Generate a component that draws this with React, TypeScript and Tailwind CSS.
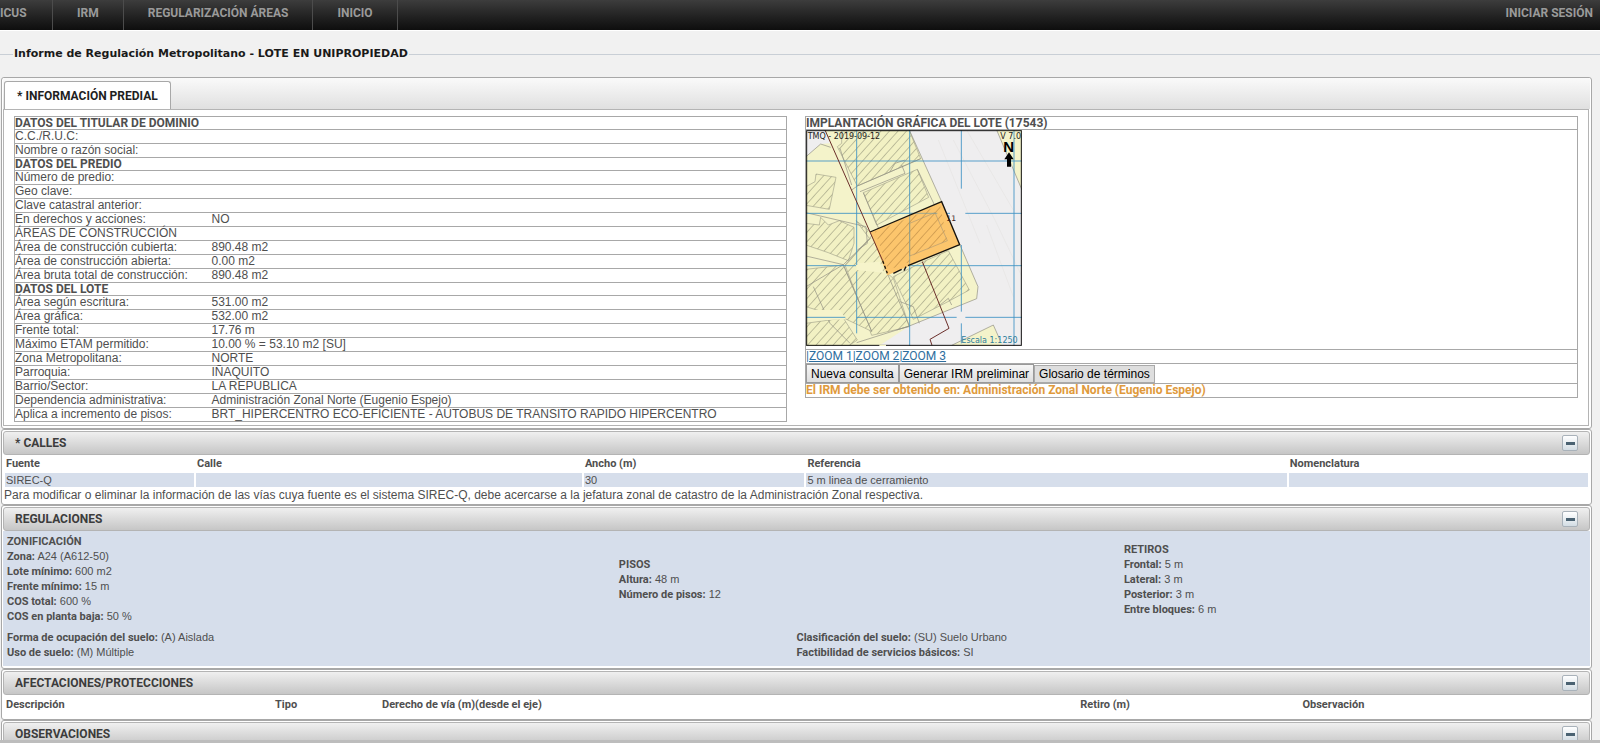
import { useState } from 'react';
import type { ReactNode } from 'react';

type Row = { label: string; value?: string; heading?: boolean; span?: boolean };

const navItems = ['IRM', 'REGULARIZACIÓN ÁREAS', 'INICIO'];

const lotRows: Row[] = [
  { label: 'DATOS DEL TITULAR DE DOMINIO', heading: true },
  { label: 'C.C./R.U.C:' },
  { label: 'Nombre o razón social:' },
  { label: 'DATOS DEL PREDIO', heading: true },
  { label: 'Número de predio:' },
  { label: 'Geo clave:' },
  { label: 'Clave catastral anterior:' },
  { label: 'En derechos y acciones:', value: 'NO' },
  { label: 'ÁREAS DE CONSTRUCCIÓN', span: true },
  { label: 'Área de construcción cubierta:', value: '890.48 m2' },
  { label: 'Área de construcción abierta:', value: '0.00 m2' },
  { label: 'Área bruta total de construcción:', value: '890.48 m2' },
  { label: 'DATOS DEL LOTE', heading: true },
  { label: 'Área según escritura:', value: '531.00 m2' },
  { label: 'Área gráfica:', value: '532.00 m2' },
  { label: 'Frente total:', value: '17.76 m' },
  { label: 'Máximo ETAM permitido:', value: '10.00 % = 53.10 m2 [SU]' },
  { label: 'Zona Metropolitana:', value: 'NORTE' },
  { label: 'Parroquia:', value: 'IÑAQUITO' },
  { label: 'Barrio/Sector:', value: 'LA REPUBLICA' },
  { label: 'Dependencia administrativa:', value: 'Administración Zonal Norte (Eugenio Espejo)' },
  {
    label: 'Aplica a incremento de pisos:',
    value: 'BRT_HIPERCENTRO ECO-EFICIENTE - AUTOBUS DE TRANSITO RAPIDO HIPERCENTRO',
  },
];

function NavBar() {
  return (
    <nav className="flex h-[31px] items-stretch border-b border-white bg-linear-to-b from-[#3d3d3d] to-[#0e0e0e] font-[Roboto,sans-serif] text-xs font-bold text-[#9a9a9a]">
      <a href="#ticus" className="w-[53px] border-r border-[#4c4c4c] pt-[5px]">
        ICUS
      </a>
      {navItems.map((item) => (
        <a key={item} href="#menu" className="border-r border-[#4c4c4c] px-6 pt-[5px]">
          {item}
        </a>
      ))}
      <a href="#login" className="ml-auto pr-[7px] pt-[5px]">
        INICIAR SESIÓN
      </a>
    </nav>
  );
}

function Section({ title, children }: { title: string; children?: ReactNode }) {
  const [open, setOpen] = useState(true);

  return (
    <section className="rounded-[3px] border border-[#a8a8a8] bg-white px-px pt-px">
      <header className="flex h-6 items-center justify-between rounded-[3px] border border-[#b4b4b4] bg-linear-to-b from-[#f0f0f0] to-[#c6c6c6] pl-[11px] pr-[11px]">
        <h2 className="font-[Roboto,sans-serif] text-xs font-bold text-[#3c3c3c]">{title}</h2>
        <button
          type="button"
          onClick={() => setOpen(!open)}
          aria-label={`Mostrar u ocultar ${title}`}
          aria-expanded={open}
          className="flex h-4 w-4 items-center justify-center rounded-[2px] border border-[#a9b2ba] bg-linear-to-b from-white to-[#d3dde4]"
        >
          <span className="h-[3px] w-[9px] bg-[#4a6272]" />
        </button>
      </header>
      {open && children}
    </section>
  );
}

function LotTable() {
  return (
    <table className="w-full table-fixed border-collapse border border-[#a8a8a8] text-left">
      <colgroup>
        <col className="w-[196px]" />
        <col />
      </colgroup>
      <tbody>
        {lotRows.map((row) =>
          row.heading || row.span ? (
            <tr key={row.label} className="border-b border-[#a8a8a8]">
              <th
                colSpan={2}
                className={
                  row.heading
                    ? 'p-0 font-[Roboto,sans-serif] leading-3 font-bold'
                    : 'p-0 leading-[13px] font-normal'
                }
              >
                {row.label}
              </th>
            </tr>
          ) : (
            <tr key={row.label} className="border-b border-[#a8a8a8]">
              <th className="p-0 leading-[13px] font-normal">{row.label}</th>
              <td className="px-px py-0 leading-[13px]">{row.value}</td>
            </tr>
          ),
        )}
      </tbody>
    </table>
  );
}

function LotMap() {
  return (
    <svg
      viewBox="78 60 648 648"
      className="block h-[216px] w-[216px]"
      fill="none"
      role="img"
      aria-label="Implantación gráfica del lote"
    >
      <defs>
        <pattern id="hatch" width="19" height="19" patternUnits="userSpaceOnUse" patternTransform="rotate(42)">
          <rect width="19" height="19" fill="#f2f1c3" />
          <path d="M1 0V19" stroke="#98977c" strokeWidth="2" />
        </pattern>
        <pattern id="hatchLot" width="19" height="19" patternUnits="userSpaceOnUse" patternTransform="rotate(42)">
          <path d="M1 0V19" stroke="#b98743" strokeWidth="2" />
        </pattern>
      </defs>
      <rect x="78" y="60" width="648" height="648" fill="#efeeef" />

      {/* manzanas */}
      <path d="M135 60L388 60L485 275L594 530L590 566L388 648L300 706L78 708V140L122 102L150 100Z" fill="#f4f3ca" />
      <path d="M650 60H726V240Z M515 706L640 645L668 708Z" fill="#f4f3ca" />
      <g fill="url(#hatch)" stroke="#a5a48c" strokeWidth="2">
        <path d="M172 110L185 100V62H388L422 146L232 228Z" />
        <path d="M250 248L412 178L446 262L290 345Z" />
        <path d="M78 230L105 215L108 192L168 202L148 298L78 286Z" />
        <path d="M78 340L118 345L122 322L145 345L178 332L222 352V400L205 452L145 428L78 405Z" />
        <path d="M228 332L272 366L322 490L340 505L388 650L275 676L195 465L268 385Z" />
        <path d="M78 478L190 465L275 664L195 626L78 590Z" />
        <path d="M340 500L430 455L505 422L568 540L498 578L400 628Z" />
        <path d="M78 640L190 624L232 690L205 708H78Z" />
      </g>
      <g stroke="#8e8d80" strokeWidth="2">
        <path d="M388 60L485 275M540 405L594 530L590 566L388 648L230 698" />
        <path d="M78 140L122 102L152 112M78 308L258 350M78 438L190 464L272 385M190 464L78 530M190 464L275 664" />
        <path d="M322 490L388 648L350 660M232 228L215 240M258 350L262 400L232 420M100 530L150 640L210 700" />
        <path d="M515 706L640 645L660 690M650 60L726 240M360 575L400 590L418 640M480 585L505 565L515 585" />
        <path d="M250 248L300 365M412 178L490 340M180 115L215 225M330 185L345 160L375 150" />
        <path d="M232 228L422 146M240 245L375 190L365 165" />
      </g>
      <g stroke="#e6e4e2" strokeWidth="2">
        <path d="M475 90L600 400M520 90L645 330L726 500M560 60L700 300M620 345L700 560" />
      </g>
      <path d="M230 460L300 455L310 488L230 480ZM85 600L180 600L198 628L90 632Z" fill="#f6f4cb" />

      {/* retícula */}
      <g stroke="#3f93c4" strokeWidth="2.6">
        <path d="M78 153H726M78 310H510M556 310H726M78 467H228M388 467H726M78 622H196M230 622H530M556 622H726" />
        <path d="M230 60V465M230 485V670M389 60V708M544 60V236M544 405V605M544 640V700M702 60V708" />
      </g>

      {/* lote */}
      <path d="M270 366L485 275L539 404L430 450L322 496Z" fill="#fcc56c" />
      <path d="M285 365L480 285L502 392L390 440L390 455L325 480Z" fill="url(#hatchLot)" />
      <path d="M389 340L465 308L502 392L389 438Z" stroke="#b19a72" strokeWidth="2" />
      <path d="M389 316V467M388 310H472" stroke="#6f9aa0" strokeWidth="2" />
      <path d="M270 366L485 275L539 404L384 467M372 482L378 470M365 478L340 490" stroke="#17130e" strokeWidth="4" />
      <path d="M135 60L270 366L308 452" stroke="#6b2f2b" strokeWidth="3" />
      <path d="M308 452L322 490" stroke="#17130e" strokeWidth="4" strokeDasharray="10 6" />
      <path d="M427 455L507 655L450 688L456 706" stroke="#6b2f2b" strokeWidth="3" />

      {/* rótulos */}
      <g fontFamily="'DejaVu Sans', sans-serif">
        <text x="83" y="86" fontSize="24" fill="#1c1c1c">
          TMQ - 2019-09-12
        </text>
        <text x="661" y="86" fontSize="24" fill="#1c1c1c">
          V 7.0
        </text>
        <text x="499" y="332" fontSize="23" fill="#3b2320">
          11
        </text>
        <text x="544" y="698" fontSize="24" fill="#2e7d9c">
          Escala 1:1250
        </text>
        <text x="670" y="125" fontSize="45" fontWeight="bold" fontFamily="'Liberation Sans', sans-serif" fill="#000">
          N
        </text>
      </g>
      <path d="M687 127L701 148H693V170H681V148H673Z" fill="#000" />
      <rect x="80" y="62" width="644" height="644" stroke="#111" strokeWidth="3" />
      <path d="M298 706H318" stroke="#f4f3ca" strokeWidth="4" />
    </svg>
  );
}

function MapTable() {
  return (
    <table className="w-full border-collapse border border-[#a8a8a8] text-left">
      <tbody>
        <tr className="border-b border-[#a8a8a8]">
          <th className="p-0 font-[Roboto,sans-serif] leading-3 font-bold">IMPLANTACIÓN GRÁFICA DEL LOTE (17543)</th>
        </tr>
        <tr className="border-b border-[#a8a8a8]">
          <td className="p-0 pb-[3px]">
            <LotMap />
          </td>
        </tr>
        <tr className="border-b border-[#a8a8a8]">
          <td className="p-0 font-[Roboto,sans-serif] leading-[13px] text-[#2e6e9e] underline">
            <a href="#zoom1">|ZOOM 1</a>
            <a href="#zoom2">|ZOOM 2</a>
            <a href="#zoom3">|ZOOM 3</a>
          </td>
        </tr>
        <tr className="border-b border-[#a8a8a8]">
          <td className="p-0">
            <div className="flex h-[19px] items-stretch text-black">
              <button type="button" className="border border-[#999] bg-linear-to-b from-[#f6f6f6] to-[#dedede] px-1">
                Nueva consulta
              </button>
              <button type="button" className="border border-[#999] bg-linear-to-b from-[#f6f6f6] to-[#dedede] px-1">
                Generar IRM preliminar
              </button>
              <button type="button" className="mt-px border border-[#a9a9a9] bg-[#dedede] px-1">
                Glosario de términos
              </button>
            </div>
          </td>
        </tr>
        <tr>
          <td className="p-0 font-[Roboto,sans-serif] leading-[13px] font-bold text-[#e09a3c]">
            El IRM debe ser obtenido en: Administración Zonal Norte (Eugenio Espejo)
          </td>
        </tr>
      </tbody>
    </table>
  );
}

function Calles() {
  return (
    <>
      <table className="w-full table-fixed border-separate border-spacing-x-[2px] border-spacing-y-0 text-left text-[11px]">
        <colgroup>
          <col className="w-[12%]" />
          <col className="w-[24.5%]" />
          <col className="w-[14%]" />
          <col className="w-[30.5%]" />
          <col className="w-[19%]" />
        </colgroup>
        <thead className="font-[Roboto,sans-serif]">
          <tr className="h-[18px] leading-4">
            <th className="px-px py-0">Fuente</th>
            <th className="px-px py-0">Calle</th>
            <th className="px-px py-0">Ancho (m)</th>
            <th className="px-px py-0">Referencia</th>
            <th className="px-px py-0">Nomenclatura</th>
          </tr>
        </thead>
        <tbody>
          <tr className="leading-[14px]">
            <td className="bg-[#d6deeb] px-px py-0">SIREC-Q</td>
            <td className="bg-[#d6deeb] px-px py-0" />
            <td className="bg-[#d6deeb] px-px py-0">30</td>
            <td className="bg-[#d6deeb] px-px py-0">5 m linea de cerramiento</td>
            <td className="bg-[#d6deeb] px-px py-0" />
          </tr>
        </tbody>
      </table>
      <p className="pb-px pl-px leading-4">
        Para modificar o eliminar la información de las vías cuya fuente es el sistema SIREC-Q, debe acercarse a la
        jefatura zonal de catastro de la Administración Zonal respectiva.
      </p>
    </>
  );
}

function Facts({ title, items }: { title?: string; items: [string, string][] }) {
  return (
    <div>
      {title && <h3 className="font-[Roboto,sans-serif] leading-[14px] font-bold">{title}</h3>}
      {items.map(([label, value]) => (
        <p key={label} className="leading-[15px]">
          <b className="font-[Roboto,sans-serif]">{label}:</b> {value}
        </p>
      ))}
    </div>
  );
}

function Regulaciones() {
  return (
    <div className="mb-[2px] bg-[#d6deeb] px-1 pt-1 pb-[6px] text-[11px]">
      <div className="grid grid-cols-[613fr_506fr_463fr] items-center">
        <Facts
          title="ZONIFICACIÓN"
          items={[
            ['Zona', 'A24 (A612-50)'],
            ['Lote mínimo', '600 m2'],
            ['Frente mínimo', '15 m'],
            ['COS total', '600 %'],
            ['COS en planta baja', '50 %'],
          ]}
        />
        <Facts
          title="PISOS"
          items={[
            ['Altura', '48 m'],
            ['Número de pisos', '12'],
          ]}
        />
        <Facts
          title="RETIROS"
          items={[
            ['Frontal', '5 m'],
            ['Lateral', '3 m'],
            ['Posterior', '3 m'],
            ['Entre bloques', '6 m'],
          ]}
        />
      </div>
      <div className="grid grid-cols-2 pt-[6px]">
        <Facts
          items={[
            ['Forma de ocupación del suelo', '(A) Aislada'],
            ['Uso de suelo', '(M) Múltiple'],
          ]}
        />
        <Facts
          items={[
            ['Clasificación del suelo', '(SU) Suelo Urbano'],
            ['Factibilidad de servicios básicos', 'SI'],
          ]}
        />
      </div>
    </div>
  );
}

function Afectaciones() {
  return (
    <table className="mb-1 w-full table-fixed text-left font-[Roboto,sans-serif] text-[11px]">
      <colgroup>
        <col className="w-[269px]" />
        <col className="w-[107px]" />
        <col className="w-[44%]" />
        <col className="w-[14%]" />
        <col />
      </colgroup>
      <thead>
        <tr className="leading-5">
          <th className="px-[3px] py-0">Descripción</th>
          <th className="px-[3px] py-0">Tipo</th>
          <th className="px-[3px] py-0">Derecho de vía (m)(desde el eje)</th>
          <th className="px-[3px] py-0">Retiro (m)</th>
          <th className="px-[3px] py-0">Observación</th>
        </tr>
      </thead>
    </table>
  );
}

export default function App() {
  return (
    <div className="h-screen overflow-hidden border-b-[3px] border-[#bdbdbd] bg-[#f1f1f1] font-['Liberation_Sans',Arial,sans-serif] text-xs text-[#4f4f4f]">
      <NavBar />
      <div className="flex items-center pt-[15px] font-['DejaVu_Sans',Verdana,sans-serif]">
        <span className="h-px w-[13px] bg-[#c9cfd6]" />
        <h1 className="px-px text-[11px] leading-4 font-bold text-[#1a1a1a]">
          Informe de Regulación Metropolitano - LOTE EN UNIPROPIEDAD
        </h1>
        <span className="h-px flex-1 bg-[#c9cfd6]" />
      </div>

      <main className="mt-[15px] mr-2 ml-px">
        <div className="rounded-[3px] border border-[#a8a8a8] bg-white px-px pb-[2px]">
          <div role="tablist" className="flex items-end bg-linear-to-b from-[#fafafa] to-[#e0e0e0] pt-[3px] pl-px">
            <button
              type="button"
              role="tab"
              aria-selected="true"
              className="h-7 rounded-t-[3px] border border-b-0 border-[#a8a8a8] bg-white px-3 font-[Roboto,sans-serif] font-bold text-[#1f1f1f]"
            >
              * INFORMACIÓN PREDIAL
            </button>
          </div>
          <div className="mr-px grid grid-cols-2 gap-[18px] border border-[#b4b4b4] px-[10px] pt-[6px] pb-[3px]">
            <LotTable />
            <div>
              <MapTable />
            </div>
          </div>
        </div>

        <Section title="* CALLES">
          <Calles />
        </Section>
        <Section title="REGULACIONES">
          <Regulaciones />
        </Section>
        <Section title="AFECTACIONES/PROTECCIONES">
          <Afectaciones />
        </Section>
        <Section title="OBSERVACIONES" />
      </main>
    </div>
  );
}
